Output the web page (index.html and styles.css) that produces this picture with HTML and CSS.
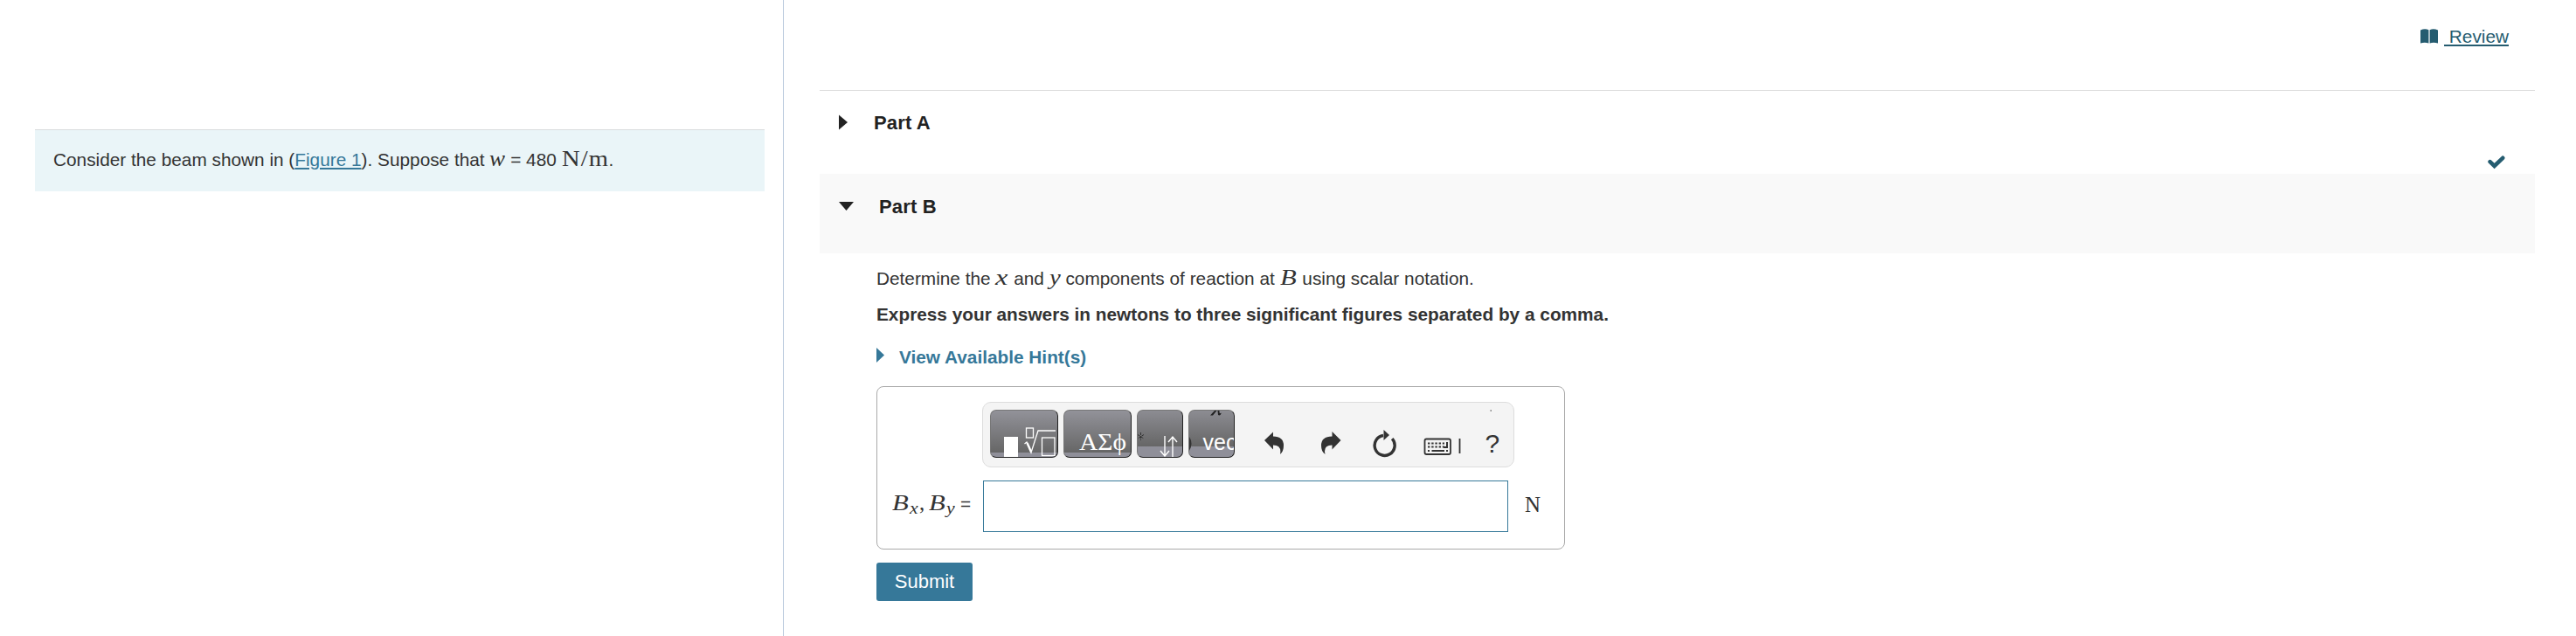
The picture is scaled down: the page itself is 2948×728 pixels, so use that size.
FILE: index.html
```
<!DOCTYPE html>
<html lang="en">
  <head>
    <meta charset="UTF-8" />
    <meta name="viewport" content="width=device-width, initial-scale=1.0" />
    <title>Part B</title>
    <link rel="stylesheet" href="styles.css">
  </head>
  <body>
    <div class="page">
      <div class="left">
        <div class="problem">Consider the beam shown in (<a href="#">Figure 1</a>). Suppose that <i class="math w">w</i> = 480 <span class="math unit">N/m</span>.</div>
      </div>

      <div class="right">
        <div class="review">
          <svg width="20" height="18" viewBox="0 0 20 18">
            <path d="M0 1.5Q5-.8 9.4 1.2V16.6Q5 14.8 0 16.6ZM10.6 1.2Q15-.8 20 1.5V16.6Q15 14.8 10.6 16.6Z" fill="#255c70" />
          </svg>
          <a href="#">&nbsp;Review</a>
        </div>

        <div class="part part-a">
          <svg width="10" height="18" viewBox="0 0 10 18"><path d="M0 0.5L10 9L0 17.5Z" /></svg>
          <h2>Part A</h2>
          <svg class="check" width="20" height="16" viewBox="0 0 20 16">
            <path d="M2.6 7.2L7.6 12L17.2 2.8" fill="none" stroke="#255c70" stroke-width="4.6" stroke-linejoin="miter" stroke-linecap="round" />
          </svg>
        </div>
        <div class="part part-b">
          <svg width="17" height="10" viewBox="0 0 17 10"><path d="M0 0H17L8.5 10Z" /></svg>
          <h2>Part B</h2>
        </div>

        <div class="content">
          <p class="question">Determine the <i class="math x">x</i> and <i class="math y">y</i> components of reaction at <i class="math b">B</i> using scalar notation.</p>
          <p class="instruction">Express your answers in newtons to three significant figures separated by a comma.</p>
          <div class="hints">
            <svg width="9" height="17" viewBox="0 0 9 17"><path d="M0 0L9 8.5L0 17Z" fill="#367899" /></svg>
            <span>View Available Hint(s)</span>
          </div>

          <div class="answer">
            <div class="toolbar">
              <button class="tool">
                <svg width="76" height="53" viewBox="0 0 76 53" fill="none" stroke="#fff">
                  <rect x="15" y="30" width="16" height="23" fill="#fff" stroke="none" />
                  <rect x="40.5" y="20" width="8" height="11" stroke-width="1.3" />
                  <path d="M38.5 38L41 36L46 48L54 23H74" stroke-width="1.3" />
                  <path d="M41.5 37L46 47" stroke-width="2.4" />
                  <rect x="58.5" y="31" width="14.5" height="20.5" stroke-width="1.3" />
                </svg>
              </button>
              <button class="tool">
                <svg width="76" height="53" viewBox="0 0 76 53">
                  <text class="greek" x="17" y="44.5" textLength="54" lengthAdjust="spacingAndGlyphs">ΑΣϕ</text>
                </svg>
              </button>
              <button class="tool tool-small">
                <svg width="51" height="53" viewBox="0 0 51 53">
                  <path d="M3.5 25V34M0 27.5L7 32M7 27.5L0 32" stroke="#333" stroke-width="1" stroke-dasharray="3 1" fill="none" />
                  <path d="M31 29V52M26 46L31 52L36 46M40 53V30M35 36L40 30L45 36" fill="none" stroke="#fff" stroke-width="1.4" />
                </svg>
              </button>
              <button class="tool tool-small">
                <svg width="51" height="53" viewBox="0 0 51 53">
                  <path d="M24 5.500L29 0H31.500L27 5.500ZM32.500 0H34.500Q34 4.500 37 2.500Q35.500 6.500 33 5Z" fill="#222" />
                  <path d="M0 30Q5 37.5 0 46Z" fill="#333" />
                  <text class="vec" x="15.500" y="45">vec</text>
                </svg>
              </button>
              <svg class="icons" width="290" height="73" viewBox="0 0 290 73">
                <path class="ink" d="M0 44L10 34.5V39.5Q22 39.5 22 50Q22 57 18 60Q20 49.5 10 49.5V54.5Z" />
                <path class="ink" d="M87.5 44L77.5 34V39.5Q65 39.5 65 50Q65 57 69.5 60Q67 49.5 77.5 49.5V54.5Z" />
                <path d="M146.2 42.2A11.5 11.5 0 1 1 136 38.5" fill="none" stroke="#333" stroke-width="3.4" />
                <path class="ink" d="M136.5 32L143 38L136.5 44Z" />
                <rect x="183.5" y="42.5" width="29.5" height="17.5" rx="2" fill="none" stroke="#333" stroke-width="1.8" />
                <path d="M187 47.5H206M187 51.5H206" stroke="#333" stroke-width="2" stroke-dasharray="2.4 1.8" />
                <path d="M209 46V52H205M191.5 56H206M187 56H189M208 56H210" fill="none" stroke="#333" stroke-width="2" />
                <path d="M223.5 42V59" stroke="#333" stroke-width="1.8" />
                <path class="ink" d="M258.5 9.500h1.500v1h-1.500z" />
                <text class="help" x="252.500" y="58">?</text>
              </svg>
            </div>

            <div class="entry">
              <label for="components"><i class="math b">B</i><i class="math sub">x</i><span class="math comma">,</span><i class="math b">B</i><i class="math sub">y</i><span class="equals">=</span></label>
              <input type="text" id="components" name="components" />
              <span class="math newton">N</span>
            </div>
          </div>

          <button class="submit" type="submit">Submit</button>
        </div>
      </div>
    </div>
  </body>
</html>
```

FILE: styles.css
```
* {
  box-sizing: border-box;
}
body {
  font-family: "Liberation Sans", Arial, sans-serif;
  font-size: 20.8px;
  line-height: 30px;
  color: #333;
  background-color: #fff;
  margin: 0;
}
svg {
  display: block;
  flex: none;
}
.page {
  display: flex;
  height: 728px;
  overflow: hidden;
}
.left {
  width: 897px;
  border-right: 1px solid #b8c8dc;
  padding: 148px 21px 0 40px;
}
.problem {
  height: 71px;
  padding: 19px 21px;
  border-top: 1px solid #d9dcdd;
  background-color: #eaf5f8;
  white-space: pre;
}
a {
  color: #367899;
  text-underline-offset: 2px;
  text-decoration-thickness: 2px;
}
.math {
  display: inline-block;
  font-family: "Liberation Serif", "Times New Roman", serif;
  font-size: 25px;
  line-height: 20px;
  transform-origin: left;
}
.w {
  width: 18px;
  transform: scaleX(1.08);
}
.unit {
  width: 54px;
  font-size: 26px;
  letter-spacing: 1px;
  transform: scaleX(1.1);
}
.x {
  width: 15px;
  transform: scaleX(1.3);
}
.y {
  width: 13px;
  transform: scaleX(1.15);
}
.b {
  width: 20px;
  font-size: 26px;
  transform: scaleX(1.18);
}
.right {
  width: 2004px;
  padding-left: 41px;
}
.review {
  display: flex;
  justify-content: flex-end;
  gap: 7px;
  height: 103px;
  padding: 27px 30px 0 0;
}
.review svg {
  margin-top: 6px;
}
.review a {
  color: #255c70;
}
.part {
  display: flex;
  align-items: flex-start;
  padding-left: 22px;
  fill: #222;
}
.part-a {
  height: 96px;
  border-top: 1px solid #ddd;
  padding-top: 27px;
}
.part-b {
  height: 91px;
  background-color: #f9f9f9;
  padding-top: 32px;
}
.part h2 {
  font-size: 22px;
  line-height: 30px;
  letter-spacing: 0.15px;
  margin: -5px 0 0 30px;
  color: #222;
}
.part-b h2 {
  margin: -9px 0 0 29px;
}
.check {
  margin: 47px 34px 0 auto;
}
.content {
  padding: 14px 0 0 65px;
}
.question,
.instruction {
  margin: 0;
  height: 41px;
  white-space: pre;
}
.instruction {
  font-weight: bold;
}
.hints {
  display: flex;
  gap: 17px;
  height: 56px;
  padding-top: 8px;
  color: #367899;
  font-weight: bold;
}
.hints svg {
  margin-top: 4px;
}
.answer {
  width: 788px;
  height: 187px;
  border: 1px solid #aaa;
  border-radius: 8px;
  padding: 17px 0 0 17px;
}
.toolbar {
  display: flex;
  gap: 6px;
  width: 609px;
  height: 75px;
  margin-left: 103px;
  padding: 8px 0 0 8px;
  border: 1px solid #ddd;
  border-radius: 10px;
  background-color: #f4f4f4;
}
.tool {
  flex: none;
  width: 78px;
  height: 55px;
  padding: 0;
  overflow: hidden;
  border: 1px solid #777;
  border-right-color: #222;
  border-bottom-color: #222;
  border-radius: 7px;
  background: linear-gradient(#929299 0, #666 48px, #8f8f99 48px);
}
.tool-small {
  width: 53px;
  background: linear-gradient(#8c8c92 0, #666 41px, #8f8f99 41px);
}
.greek {
  font-family: "Liberation Serif", "Times New Roman", serif;
  font-size: 28px;
  fill: #fff;
}
.vec {
  font-size: 25px;
  fill: #fff;
}
.icons {
  margin: -9px 0 0 28px;
}
.ink {
  fill: #333;
}
.help {
  font-size: 30px;
  fill: #333;
}
.entry {
  display: flex;
  align-items: center;
  height: 59px;
  margin-top: 15px;
}
.entry label {
  width: 104px;
  margin-top: -5px;
}
.sub {
  position: relative;
  top: 4px;
  width: 10px;
  font-size: 19px;
  transform: scaleX(1.15);
}
.comma {
  width: 12px;
  padding-left: 1px;
}
.equals {
  margin-left: 6px;
}
.entry input {
  width: 601px;
  height: 59px;
  border: 1px solid #367899;
  background-color: #fff;
}
.newton {
  margin: -4px 0 0 19px;
}
.submit {
  width: 110px;
  height: 44px;
  margin-top: 15px;
  padding: 0;
  border: 0;
  border-radius: 3px;
  background-color: #367899;
  color: #fff;
  font-family: inherit;
  font-size: 22px;
}
```
